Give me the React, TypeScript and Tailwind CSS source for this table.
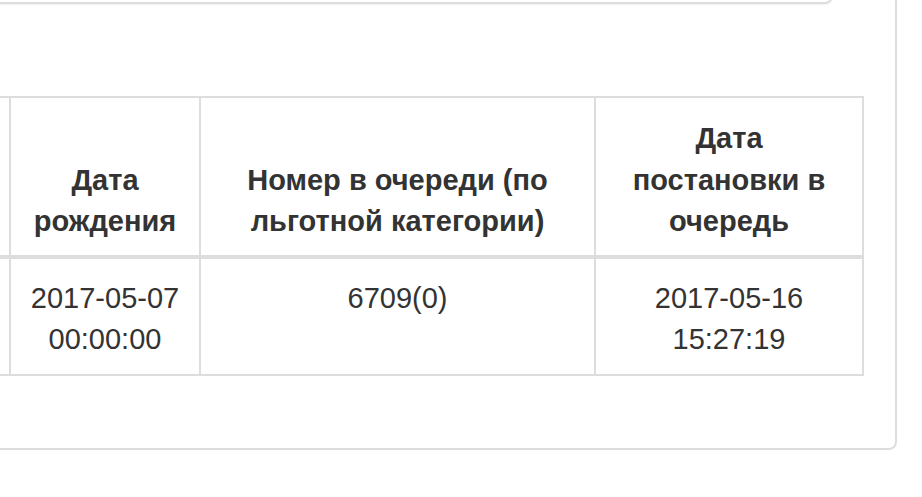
import React from 'react';

interface QueueRow {
  birthDate: string[];
  queueNumber: string;
  queuedAt: string[];
}

const rows: QueueRow[] = [
  {
    birthDate: ['2017-05-07', '00:00:00'],
    queueNumber: '6709(0)',
    queuedAt: ['2017-05-16', '15:27:19'],
  },
];

const th = 'border-l-2 border-t-2 border-b-4 border-[#ddd] align-bottom text-center font-bold';
const td = 'border-l-2 border-b-2 border-[#ddd] align-top text-center font-normal';

const App: React.FC = () => {
  return (
    <div
      className="h-[497px] overflow-hidden bg-white text-[#333] text-[29px] leading-[41.5px]"
      style={{ fontFamily: '"Liberation Sans", Arial, sans-serif' }}
    >
      {/* Outer panel */}
      <div className="ml-[-40px] mr-[25px] mt-[-40px] rounded-[8px] border-2 border-[#ddd] pl-[31px] pr-[31px] pb-[72px]">
        {/* Panel above the table */}
        <div className="mr-[31px] h-[42px] rounded-[8px] border-2 border-[#ddd] shadow-[0_1px_2px_rgba(0,0,0,0.06)]" />

        {/* Queue table */}
        <table className="mt-[92px] w-[871px] table-fixed border-separate border-spacing-0">
          <thead>
            <tr>
              <th className={`${th} w-[16px]`} />
              <th className={`${th} w-[190px] px-4 pt-[20px] pb-[12px]`}>Дата рождения</th>
              <th className={`${th} w-[395px] px-4 pt-[20px] pb-[12px]`}>
                Номер в очереди (по льготной категории)
              </th>
              <th className={`${th} w-[270px] border-r-2 px-4 pt-[20px] pb-[12px]`}>
                Дата постановки в очередь
              </th>
            </tr>
          </thead>
          <tbody>
            {rows.map((row, i) => (
              <tr key={i}>
                <td className={td} />
                <td className={`${td} px-4 pt-[19px] pb-[13px]`}>
                  {row.birthDate[0]}
                  <br />
                  {row.birthDate[1]}
                </td>
                <td className={`${td} px-4 pt-[19px] pb-[13px]`}>{row.queueNumber}</td>
                <td className={`${td} border-r-2 px-4 pt-[19px] pb-[13px]`}>
                  {row.queuedAt[0]}
                  <br />
                  {row.queuedAt[1]}
                </td>
              </tr>
            ))}
          </tbody>
        </table>
      </div>
    </div>
  );
};

export default App;
